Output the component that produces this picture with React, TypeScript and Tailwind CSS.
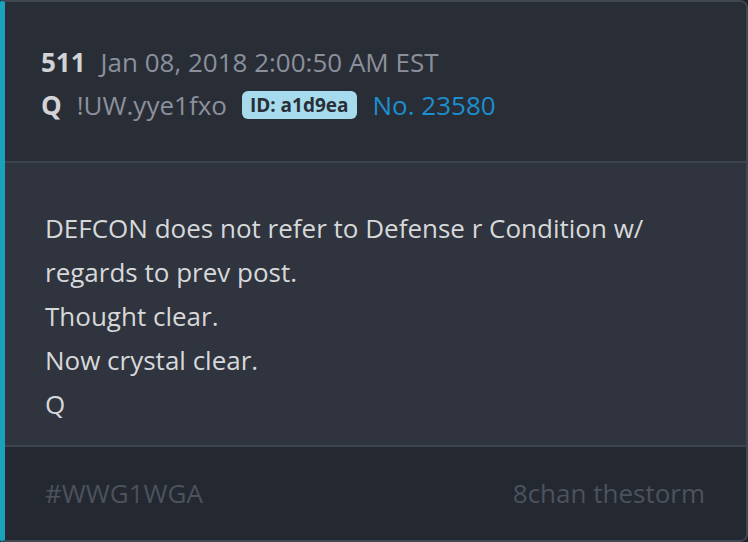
import React from "react";

export default function App() {
  return (
    <div className="w-[748px] h-[542px] bg-[#1e2128]" style={{ fontFamily: '"Open Sans", sans-serif' }}>
      <div className="w-[748px] h-[542px] flex flex-col rounded-r-[8px] rounded-l-[3px] overflow-hidden border-t-2 border-r-2 border-b-2 border-[#414752] border-l-[5px] border-l-[#18a3bb]">
        <div className="h-[159px] shrink-0 bg-[#292d36] pl-[36px] pt-[41px]">
          <div className="flex items-baseline h-[38px]">
            <span className="text-[26px] font-bold text-[#d2d3d6]">511</span>
            <span className="ml-[15px] text-[26px] text-[#8b909d]">Jan 08, 2018 2:00:50 AM EST</span>
          </div>
          <div className="flex items-center mt-[5px] h-[38px]">
            <span className="text-[26px] font-bold text-[#d2d3d6]">Q</span>
            <span className="ml-[15px] text-[26px] text-[#8b909d]">!UW.yye1fxo</span>
            <span className="ml-[15px] px-[8px] h-[28px] leading-[28px] rounded-[6px] bg-[#a5dbec] text-[#2a2e36] font-bold text-[19px]">ID: a1d9ea</span>
            <span className="ml-[16px] text-[26px] text-[#1b8fcf]">No. 23580</span>
          </div>
        </div>
        <div className="h-[2px] shrink-0 bg-[#3e444e]" />
        <div className="h-[282px] shrink-0 bg-[#2f343e] pl-[40px] pt-[43px] text-[26px] leading-[44px] text-[#d7d8da]">
          <div>DEFCON does not refer to Defense r Condition w/</div>
          <div>regards to prev post.</div>
          <div>Thought clear.</div>
          <div>Now crystal clear.</div>
          <div>Q</div>
        </div>
        <div className="h-[2px] shrink-0 bg-[#3e444e]" />
        <div className="flex-1 bg-[#242830] pl-[40px] pr-[41px] flex items-center justify-between text-[26px] text-[#4c525e]">
          <span>#WWG1WGA</span>
          <span>8chan thestorm</span>
        </div>
      </div>
    </div>
  );
}
